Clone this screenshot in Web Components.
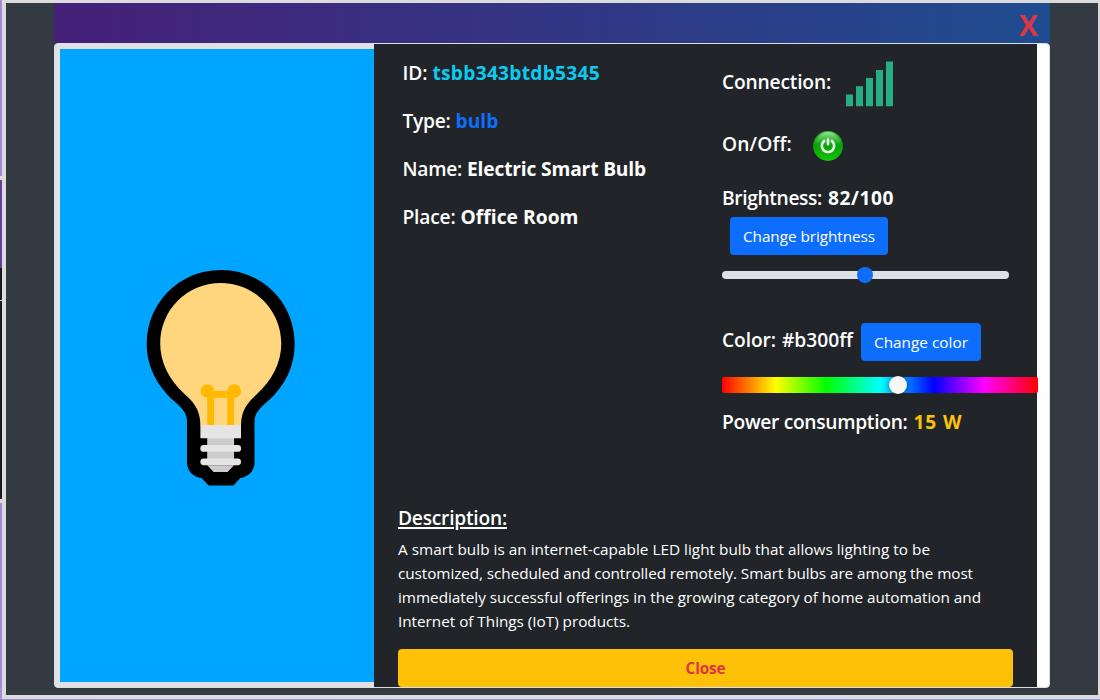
<!DOCTYPE html>
<html lang="en">
<head>
<meta charset="utf-8">
<title>Smart device</title>
<style>
html,body{margin:0;height:100%;overflow:hidden;background:#32383e}
body{font-family:"Open Sans","Noto Sans",sans-serif;color:#fff}
</style>
</head>
<body>
<device-page></device-page>
<script>
const define = (name, html, ready) => customElements.define(name, class extends HTMLElement {
  connectedCallback() {
    if (!this.shadowRoot) this.attachShadow({mode: 'open'}).innerHTML = html;
    if (ready) ready(this, this.shadowRoot);
  }
});

/* A run of text that is tracked to a given advance width. */
define('fit-text', `<style>
:host{display:inline-block;white-space:pre;flex:none}
span{display:inline-block;white-space:pre}
:host([underlined]) span{text-decoration:underline;text-decoration-thickness:2px;text-underline-offset:2px}
</style><span><slot></slot></span>`, (el, root) => {
  const s = root.querySelector('span');
  const w = +el.getAttribute('w');
  s.style.letterSpacing = ((w - s.getBoundingClientRect().width) / el.textContent.length) + 'px';
  el.style.width = w + 'px';
});

define('info-row', `<style>
:host{display:flex;align-items:center;height:48px;font-size:19.200px;line-height:24px;font-weight:600}
::slotted(b){font-weight:700}
</style><slot></slot>`);

define('app-button', `<style>
:host{display:block;flex:none}
button{display:flex;align-items:center;justify-content:center;box-sizing:border-box;width:100%;height:38px;padding:0;border:0;border-radius:4px;
background:var(--bg,#0d6efd);color:var(--fg,#fff);font:var(--weight,400) 15.300px/24px "Open Sans","Noto Sans",sans-serif}
</style><button type="button"><slot></slot></button>`);

define('signal-bars', `<style>:host{display:block;width:48px;height:46px}svg{display:block}</style>
<svg width="48" height="46" viewBox="0 0 48 46" fill="#27ae85">
<path d="M0 33.500h7V45.300H0zM10 25.300h7v20h-7zM20 17h7v28.300h-7zM30 9h7v36.300h-7zM40 .5h7v44.800h-7z"/></svg>`);

define('power-icon', `<style>:host{display:block;width:30px;height:30px}svg{display:block}</style>
<svg width="30" height="30" viewBox="0 0 30 30"><defs>
<linearGradient id="g" x2="0" y2="1"><stop offset="0" stop-color="#35b835"/><stop offset=".5" stop-color="#06a306"/><stop offset="1" stop-color="#13c70b"/></linearGradient>
<linearGradient id="h" x2="0" y2="1"><stop offset="0" stop-color="#9be69b"/><stop offset="1" stop-color="#2eb52e" stop-opacity=".25"/></linearGradient></defs>
<circle cx="15" cy="15" r="14.900" fill="url(#g)"/>
<path d="M2.800 11.500C4 5.200 9 1 15 1s11 4.200 12.200 10.500C20 14.300 10 14.300 2.800 11.500z" fill="url(#h)"/>
<path d="M11.100 10a6.200 6.200 0 1 0 7.800 0M15 8.500v4.700" fill="none" stroke="#efffed" stroke-width="2.600" stroke-linecap="round"/></svg>`);

define('bulb-picture', `<style>:host{display:block;width:150px;height:218px}svg{display:block}</style>
<svg width="150" height="218" viewBox="146 269 150 218">
<path d="M220.700 269.900C179 269.900 146.700 303 146.700 344C146.700 366 157 386 174 401C182 408 187 413 187 421.500V463C187 470.500 193.500 477.500 201.500 478L208.700 485.500H233.500L240.300 478C248.500 477 254.500 470.500 254.500 463V421.500C254.500 413 260 408 268 401C285 386 294.700 366 294.700 344C294.700 303 262.500 269.900 220.700 269.900Z" fill="#000"/>
<path d="M220.700 283.100C187 283.100 160.200 310 160.200 343.700C160.200 362 169 380 184.500 394C193 401.500 200.400 409 200.400 425.500H241C241 409 249 401.500 257 394C272.500 380 281.300 362 281.300 343.700C281.300 310 254.500 283.100 220.700 283.100Z" fill="#ffd67d"/>
<g fill="#ffb900"><circle cx="207.300" cy="391" r="6.800"/><circle cx="234.200" cy="391" r="6.800"/><path d="M207 391h27v6.800h-27z"/><path d="M207.200 391h6.800v34h-6.800zM227.300 391h6.800v34h-6.800z"/></g>
<path d="M207.200 437h26.900v25h-26.900z" fill="#ccc"/>
<path d="M200.400 425H241v13.300h-40.600zM203.700 445h34a3.400 3.400 0 0 1 0 6.800h-34a3.400 3.400 0 0 1 0-6.800zM203.700 458.500h34a3.300 3.300 0 0 1 0 6.700h-34a3.300 3.300 0 0 1 0-6.700z" fill="#e5e5e5"/>
<path d="M207.200 465.200h26.900l-6.500 6.800h-14z" fill="#ccc"/>
</svg>`);

define('range-slider', `<style>
:host{display:block;width:287px;height:16px;padding:4px 0;box-sizing:border-box}
.track{position:relative;height:8px;border-radius:4px;background:#dee2e6}
.thumb{position:absolute;left:135px;top:-4px;width:16px;height:16px;border-radius:50%;background:#0d6efd}
</style><div class="track"><div class="thumb"></div></div>`);

define('hue-slider', `<style>
:host{display:block;width:316px;height:16px}
.track{position:relative;height:16px;border-radius:2px;background:linear-gradient(to right,#f00 0%,#ff0 17%,#0f0 33%,#0ff 50%,#00f 67%,#f0f 83%,#f00 100%)}
.thumb{position:absolute;left:167px;top:-1px;width:18px;height:18px;border-radius:50%;background:#f8f8f8;box-shadow:0 1px 4px rgba(0,0,0,.37)}
</style><div class="track"><div class="thumb"></div></div>`);

define('modal-header', `<style>
:host{display:flex;justify-content:flex-end;align-items:center;height:40px;padding-right:11px;box-sizing:border-box;background:linear-gradient(to right,#462078,#1f4c90)}
span{font:700 28.500px/40px "Open Sans","Noto Sans",sans-serif;color:#dc3545;padding-top:3px}
</style><span><fit-text w="20">X</fit-text></span>`);

define('device-details', `<style>
:host{display:grid;grid-template-columns:320px 1fr;grid-template-rows:460px 1fr;width:663px;background:#212529;box-sizing:border-box}
.left{padding:5px 0 0 28.500px}
.right{padding-left:28px;width:316px}
.left info-row{gap:5px}
.right info-row{gap:6px}
.info{color:#0dcaf0}.prim{color:#0d6efd}.warn{color:#ffc107}
.bottom{grid-column:1/3;padding:0 24px;display:flex;flex-direction:column}
h5{margin:0 0 7px;padding-top:2px;font:600 19.200px/24px "Open Sans","Noto Sans",sans-serif;height:24px}
p{margin:0 0 16px;font-size:15.300px;line-height:24px;display:flex;flex-direction:column}
</style>
<div class="left">
<info-row><fit-text w="25">ID:</fit-text><b class="info"><fit-text w="167.500">tsbb343btdb5345</fit-text></b></info-row>
<info-row><fit-text w="48">Type:</fit-text><b class="prim"><fit-text w="43">bulb</fit-text></b></info-row>
<info-row><fit-text w="59.500">Name:</fit-text><b><fit-text w="179">Electric Smart Bulb</fit-text></b></info-row>
<info-row><fit-text w="53">Place:</fit-text><b><fit-text w="118">Office Room</fit-text></b></info-row>
</div>
<div class="right">
<info-row style="height:76px;gap:15px"><fit-text w="109">Connection:</fit-text><signal-bars style="margin-top:3px"></signal-bars></info-row>
<info-row style="height:48px;gap:21px"><fit-text w="70">On/Off:</fit-text><power-icon style="margin-top:4px"></power-icon></info-row>
<info-row style="height:60px;margin-bottom:-11px"><fit-text w="100">Brightness:</fit-text><b><fit-text w="66">82/100</fit-text></b></info-row>
<app-button style="width:158px;margin-left:8px"><fit-text w="132">Change brightness</fit-text></app-button>
<range-slider style="margin-top:12px"></range-slider>
<info-row style="margin-top:34px;height:50px;gap:8px"><div style="display:flex;gap:6px;margin-bottom:5px"><fit-text w="54">Color:</fit-text><fit-text w="71">#b300ff</fit-text></div><app-button style="width:120px"><fit-text w="94">Change color</fit-text></app-button></info-row>
<hue-slider style="margin-top:10px"></hue-slider>
<info-row style="height:58px"><fit-text w="185.500">Power consumption:</fit-text><b class="warn"><fit-text w="49">15 W</fit-text></b></info-row>
</div>
<div class="bottom">
<h5><fit-text underlined w="109">Description:</fit-text></h5>
<p><fit-text w="532">A smart bulb is an internet-capable LED light bulb that allows lighting to be</fit-text><fit-text w="575">customized, scheduled and controlled remotely. Smart bulbs are among the most</fit-text><fit-text w="583">immediately successful offerings in the growing category of home automation and</fit-text><fit-text w="232">Internet of Things (IoT) products.</fit-text></p>
<app-button style="width:615px;--bg:#ffc107;--fg:#dc3545;--weight:700"><fit-text w="40">Close</fit-text></app-button>
</div>`);

define('device-card', `<style>
:host{display:flex;height:645px;box-sizing:border-box;border:1px solid #dfdfe3;border-radius:4px;background:#fff;overflow:hidden}
.pic{box-sizing:border-box;width:319px;border:5px solid #dee2e6;border-right:0;background:#00a5ff;display:flex;justify-content:center;padding:220px 0 0 8px;flex:none}
</style><div class="pic"><bulb-picture></bulb-picture></div><device-details></device-details>`);

/* The sliver of the page that stays visible left of the dialog. */
define('page-edge', `<style>
:host{display:flex;flex-direction:column;width:2px;height:700px}
i{display:block}
</style><i style="height:176px;background:#a28ddb"></i><i style="height:4px;background:#ddd"></i><i style="height:88px;background:#6340a0"></i><i style="height:32px;background:#151a20"></i><i style="height:1px;background:#ddd"></i><i style="height:198px;background:#151a20"></i><i style="height:4px;background:#ddd"></i><i style="flex:1;background:#a28ddb"></i>`);

define('device-page', `<style>
:host{display:grid;grid-template-columns:2px 1098px;width:1100px;height:700px;background:linear-gradient(to right,#a28ddb,#8f9fee)}
.dialog{box-sizing:border-box;height:699px;border:solid #dcdcdc;border-width:3px 2px 4px 4px;background:#333a41;padding:0 48px}
</style><page-edge></page-edge><div class="dialog"><modal-header></modal-header><device-card></device-card></div>`);
</script>
</body>
</html>
